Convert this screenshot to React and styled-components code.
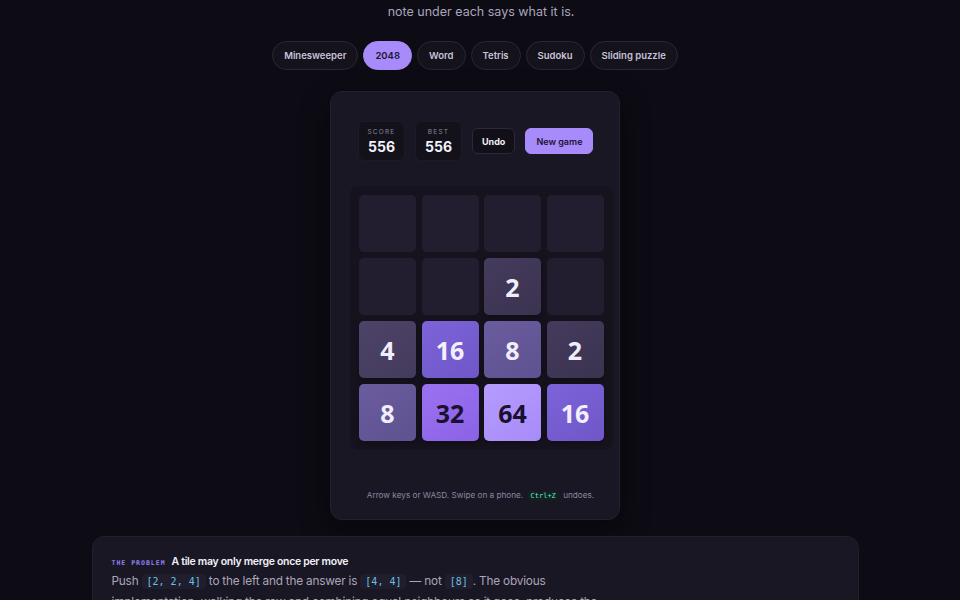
import React from 'react';
import styled, { createGlobalStyle } from 'styled-components';

const GlobalStyle = createGlobalStyle`
  html, body {
    margin: 0;
    background: #0d0b13;
  }
  body {
    font-family: Inter, "Liberation Sans", sans-serif;
    color: #e9e6f3;
  }
`;

const Page = styled.div`
  display: flex;
  flex-direction: column;
  align-items: center;
  min-height: 600px;
  padding-right: 10px;
`;

const Lede = styled.p`
  margin: 0;
  padding-left: 12px;
  font-size: 12.5px;
  line-height: 24px;
  color: #aaa5bd;
`;

const Tabs = styled.nav`
  display: flex;
  gap: 5px;
  margin-top: 17px;
`;

const Tab = styled.button`
  height: 29px;
  padding: 0 11px;
  border-radius: 15px;
  border: 1px solid ${p => (p.$active ? '#a78bfa' : '#2a2737')};
  background: ${p => (p.$active ? '#a78bfa' : '#14121b')};
  color: ${p => (p.$active ? '#1c1433' : '#c8c3da')};
  font-family: inherit;
  font-size: 9.5px;
  font-weight: 600;
  white-space: nowrap;
`;

const GameCard = styled.section`
  width: 290px;
  box-sizing: border-box;
  margin-top: 21px;
  padding: 29px 8px 16px 19px;
  background: #1a1725;
  border: 1px solid #24202f;
  border-radius: 12px;
  box-shadow: 0 10px 30px rgba(0, 0, 0, 0.35);
`;

const Header = styled.div`
  display: flex;
  align-items: center;
  gap: 10px;
  padding: 0 8px;
`;

const ScoreBox = styled.div`
  width: 47px;
  height: 40px;
  box-sizing: border-box;
  display: flex;
  flex-direction: column;
  align-items: center;
  justify-content: center;
  gap: 3px;
  background: #13111a;
  border: 1px solid #1e1b28;
  border-radius: 6px;
`;

const ScoreLabel = styled.span`
  font-size: 6.5px;
  letter-spacing: 1.2px;
  color: #8a8599;
`;

const ScoreValue = styled.span`
  font-size: 14px;
  font-weight: 700;
  line-height: 15px;
  color: #f4f2fa;
`;

const Button = styled.button`
  height: 26px;
  padding: 0 ${p => (p.$primary ? '10px' : '9px')};
  border-radius: 6px;
  border: 1px solid ${p => (p.$primary ? '#a78bfa' : '#2d2939')};
  background: ${p => (p.$primary ? '#a78bfa' : '#110f18')};
  color: ${p => (p.$primary ? '#1d1433' : '#f3f1f9')};
  font-family: inherit;
  font-size: 9px;
  font-weight: ${p => (p.$primary ? 600 : 700)};
  white-space: nowrap;
`;

const Board = styled.div`
  display: grid;
  grid-template-columns: repeat(4, 57px);
  grid-auto-rows: 57px;
  column-gap: 5.5px;
  row-gap: 6px;
  width: max-content;
  margin-top: 25px;
  padding: 9px;
  background: #16131e;
  border-radius: 8px;
`;

const tileColors = {
  0: ['#221e2f', '#221e2f', '#fff'],
  2: ['#453b5d', '#3b3350', '#f1eefb'],
  4: ['#4d4368', '#443b5c', '#f1eefb'],
  8: ['#6a5c9e', '#5f5290', '#f1eefb'],
  16: ['#7c63d8', '#6f57c8', '#f3f0fd'],
  32: ['#9a72f0', '#8c62e6', '#1a1030'],
  64: ['#b59cfd', '#a78bfa', '#1a1030'],
};

const Tile = styled.div`
  display: flex;
  align-items: center;
  justify-content: center;
  border-radius: 5px;
  background: linear-gradient(145deg, ${p => tileColors[p.$v][0]}, ${p => tileColors[p.$v][1]});
  color: ${p => tileColors[p.$v][2]};
  font-family: "Noto Sans", "DejaVu Sans", sans-serif;
  font-size: 25px;
  font-weight: 700;
  box-shadow: ${p => (p.$v ? '0 2px 6px rgba(0, 0, 0, 0.3)' : 'none')};
`;

const Hint = styled.p`
  margin: 38px 0 0;
  font-size: 8.2px;
  line-height: 14px;
  text-align: center;
  white-space: nowrap;
  color: #8c879f;
`;

const Kbd = styled.code`
  font-family: "DejaVu Sans Mono", "Liberation Mono", monospace;
  font-size: 7px;
  padding: 1px 3px;
  margin: 0 2px;
  border-radius: 3px;
  background: #13201f;
  color: #5eead4;
`;

const Note = styled.article`
  width: 767px;
  box-sizing: border-box;
  margin-top: 16px;
  padding: 17px 19px 20px;
  background: #1a1724;
  border: 1px solid #221f2c;
  border-radius: 12px;
`;

const NoteHead = styled.div`
  display: flex;
  align-items: baseline;
  gap: 6px;
  line-height: 16px;
`;

const Eyebrow = styled.span`
  font-family: "DejaVu Sans Mono", "Liberation Mono", monospace;
  font-size: 6.5px;
  font-weight: 700;
  letter-spacing: 1px;
  color: #8f7ff2;
`;

const NoteTitle = styled.h3`
  margin: 0;
  font-size: 10.5px;
  font-weight: 600;
  letter-spacing: -0.3px;
  color: #f3f1f8;
`;

const Body = styled.p`
  margin: 0;
  max-width: 490px;
  font-size: 11.8px;
  letter-spacing: -0.2px;
  line-height: 20px;
  color: #aaa5bb;
`;

const Code = styled.code`
  font-family: "DejaVu Sans Mono", "Liberation Mono", monospace;
  font-size: 10px;
  letter-spacing: 0;
  padding: 2px 5px;
  border-radius: 4px;
  background: #201d2c;
  color: #66c0e2;
`;

const games = ['Minesweeper', '2048', 'Word', 'Tetris', 'Sudoku', 'Sliding puzzle'];

const grid = [
  0, 0, 0, 0,
  0, 0, 2, 0,
  4, 16, 8, 2,
  8, 32, 64, 16,
];

export default function App() {
  return (
    <>
      <GlobalStyle />
      <Page>
        <Lede>note under each says what it is.</Lede>
        <Tabs>
          {games.map(g => (
            <Tab key={g} $active={g === '2048'}>{g}</Tab>
          ))}
        </Tabs>

        <GameCard>
          <Header>
            <ScoreBox>
              <ScoreLabel>SCORE</ScoreLabel>
              <ScoreValue>556</ScoreValue>
            </ScoreBox>
            <ScoreBox>
              <ScoreLabel>BEST</ScoreLabel>
              <ScoreValue>556</ScoreValue>
            </ScoreBox>
            <Button>Undo</Button>
            <Button $primary>New game</Button>
          </Header>
          <Board>
            {grid.map((v, i) => (
              <Tile key={i} $v={v}>{v || ''}</Tile>
            ))}
          </Board>
          <Hint>
            Arrow keys or WASD. Swipe on a phone. <Kbd>Ctrl+Z</Kbd> undoes.
          </Hint>
        </GameCard>

        <Note>
          <NoteHead>
            <Eyebrow>THE PROBLEM</Eyebrow>
            <NoteTitle>A tile may only merge once per move</NoteTitle>
          </NoteHead>
          <Body>
            Push <Code>[2, 2, 4]</Code> to the left and the answer is <Code>[4, 4]</Code> — not{' '}
            <Code>[8]</Code>. The obvious implementation, walking the row and combining equal
            neighbours as it goes, produces the wrong answer unless each merged tile is marked.
          </Body>
        </Note>
      </Page>
    </>
  );
}
